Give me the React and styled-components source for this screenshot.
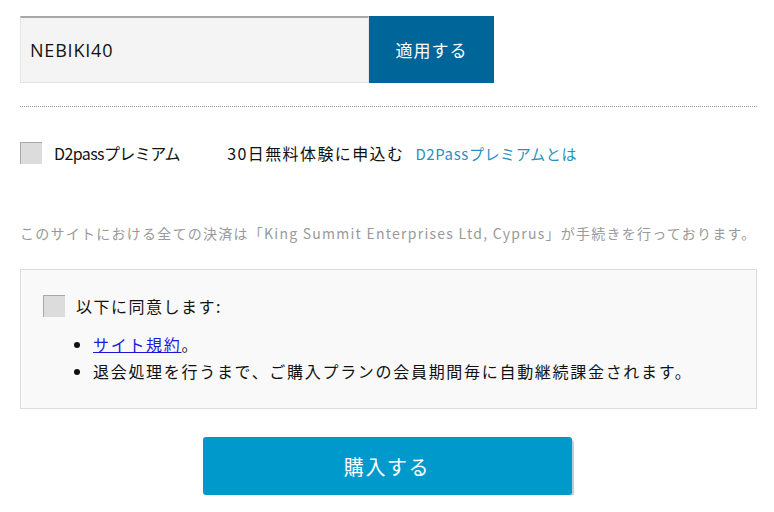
import React from 'react';
import styled, { createGlobalStyle } from 'styled-components';

const GlobalStyle = createGlobalStyle`
    body {
        margin: 0;
        background: #fff;
        font-family: "Open Sans", "Noto Sans CJK JP", sans-serif;
    }
`;

const Page = styled.div`
    width: 736px;
    padding: 16px 18px 0 20px;
`;

const CouponRow = styled.div`
    display: flex;
    height: 67px;
`;

const CouponInput = styled.input`
    box-sizing: border-box;
    width: 349px;
    height: 67px;
    border: 1px solid #e4e4e4;
    border-top: 2px solid #a8a8a8;
    background: #f4f4f4;
    padding: 0 0 0 9px;
    font-family: "Open Sans", "Noto Sans CJK JP", sans-serif;
    font-size: 18px;
    letter-spacing: 0.8px;
    color: #111;
    outline: none;
`;

const ApplyButton = styled.button`
    width: 125px;
    height: 67px;
    border: none;
    background: #00669a;
    color: #fff;
    font-family: "Noto Sans CJK JP", sans-serif;
    font-size: 17px;
    letter-spacing: 1px;
    cursor: pointer;
`;

const Divider = styled.hr`
    margin: 23px 0 0;
    border: none;
    border-top: 1px dotted #999;
    width: 737px;
`;

const Box = styled.span`
    box-sizing: border-box;
    display: inline-block;
    flex-shrink: 0;
    width: 22px;
    height: 22px;
    background: #dcdcdc;
    border-top: 1px solid #a8a8a8;
    border-left: 1px solid #a8a8a8;
`;

const TrialRow = styled.label`
    display: flex;
    align-items: center;
    margin-top: 35px;
    height: 22px;
    gap: 12px;
    font-family: "Noto Sans CJK JP", sans-serif;
    font-size: 16px;
    color: #111;
`;

const PlanName = styled.span`
    letter-spacing: -0.6px;
`;

const Offer = styled.span`
    margin-left: 32px;
    letter-spacing: 1.4px;
`;

const InfoLink = styled.a`
    margin-left: -1px;
    font-size: 15px;
    letter-spacing: 0.6px;
    color: #2b8fc0;
    text-decoration: none;
`;

const Notice = styled.p`
    margin: 59px 0 0;
    font-family: "Noto Sans CJK JP", sans-serif;
    font-size: 14px;
    letter-spacing: 1.25px;
    color: #9a9a9a;
    white-space: nowrap;
`;

const AgreeBox = styled.div`
    box-sizing: border-box;
    margin-top: 26px;
    width: 737px;
    height: 140px;
    padding: 25px 22px 0;
    background: #f9f9f9;
    border: 1px solid #dcdcdc;
    font-family: "Noto Sans CJK JP", sans-serif;
    font-size: 16px;
    color: #111;
`;

const AgreeRow = styled.label`
    display: flex;
    align-items: center;
    gap: 11px;
    height: 22px;
    letter-spacing: 1.5px;
`;

const TermsList = styled.ul`
    margin: 14px 0 0;
    padding-left: 50px;
    line-height: 27px;
    letter-spacing: 1.7px;
`;

const TermsLink = styled.a`
    color: #1a1ad8;
    text-decoration: underline;
`;

const Actions = styled.div`
    display: flex;
    justify-content: center;
    padding-top: 28px;
    padding-right: 2px;
`;

const BuyButton = styled.button`
    width: 369px;
    height: 58px;
    border: none;
    border-radius: 3px;
    background: #0099cc;
    box-shadow: 2px 3px 0 #b9cfdc;
    color: #fff;
    font-family: "Noto Sans CJK JP", sans-serif;
    font-size: 20px;
    letter-spacing: 1.6px;
    cursor: pointer;
`;

const App = () => {
    return (
        <>
            <GlobalStyle />
            <Page>
                <CouponRow>
                    <CouponInput defaultValue="NEBIKI40" />
                    <ApplyButton>適用する</ApplyButton>
                </CouponRow>
                <Divider />
                <TrialRow>
                    <Box />
                    <PlanName>
                        {'D2passプレミアム\u3000'}
                        <Offer>30日無料体験に申込む</Offer>
                    </PlanName>
                    <InfoLink href="#">D2Passプレミアムとは</InfoLink>
                </TrialRow>
                <Notice>
                    このサイトにおける全ての決済は「King Summit Enterprises Ltd, Cyprus」が手続きを行っております。
                </Notice>
                <AgreeBox>
                    <AgreeRow>
                        <Box />
                        以下に同意します:
                    </AgreeRow>
                    <TermsList>
                        <li><TermsLink href="#">サイト規約</TermsLink>。</li>
                        <li>退会処理を行うまで、ご購入プランの会員期間毎に自動継続課金されます。</li>
                    </TermsList>
                </AgreeBox>
                <Actions>
                    <BuyButton>購入する</BuyButton>
                </Actions>
            </Page>
        </>
    );
};

export default App;
